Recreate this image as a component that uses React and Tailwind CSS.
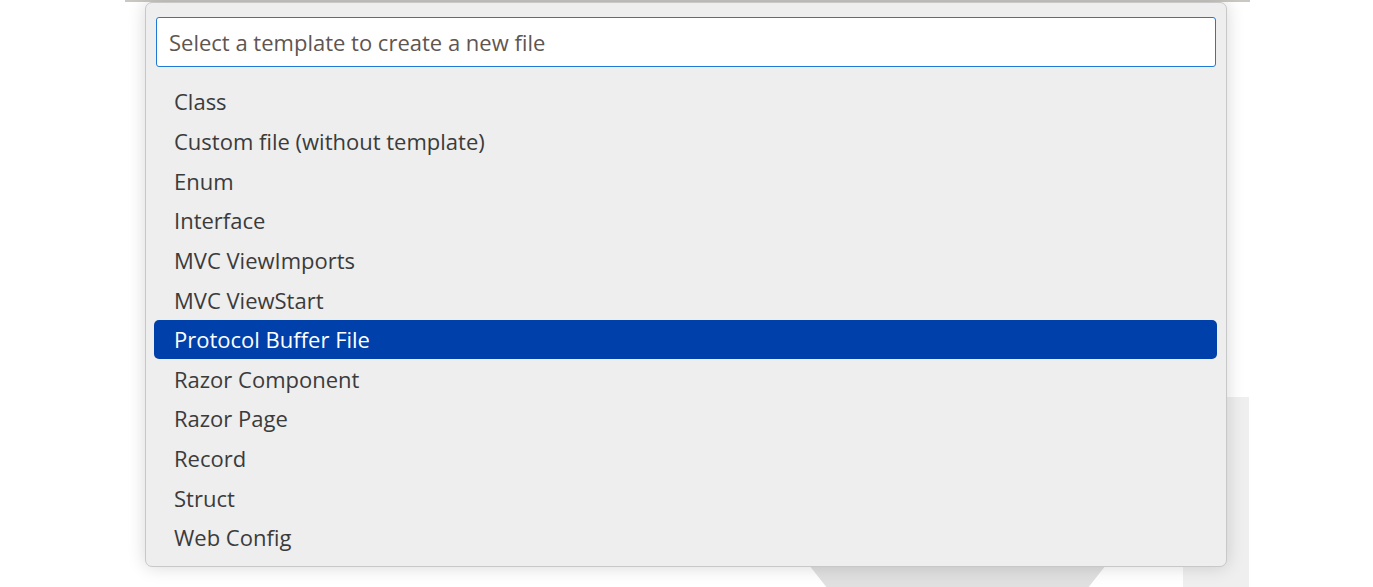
import React from 'react';

const items = [
  'Class',
  'Custom file (without template)',
  'Enum',
  'Interface',
  'MVC ViewImports',
  'MVC ViewStart',
  'Protocol Buffer File',
  'Razor Component',
  'Razor Page',
  'Record',
  'Struct',
  'Web Config',
];

export default function App() {
  const selected = 6;
  return (
    <div className="relative w-[1373px] h-[587px] bg-white overflow-hidden" style={{ fontFamily: '"Open Sans", "Noto Sans", sans-serif' }}>
      {/* editor bits behind the quick pick */}
      <div className="absolute left-[1183px] top-[397px] w-[66px] h-[190px] bg-[#efefef]" />
      <div className="absolute left-[805px] top-[560px] w-[305px] h-[27px] bg-[#e0e0e0] [clip-path:polygon(0_0,100%_0,93%_100%,7%_100%)]" />

      <div className="relative ml-[125px] w-[1125px] h-[2px] bg-[#cbc7c3]" />
      <div className="relative ml-[145px] w-[1082px] h-[565px] bg-[#eeeeee] border border-[#c8c8c8] rounded-[7px] shadow-[0_0_18px_rgba(0,0,0,0.16)] px-[10px] pt-[14px]">
        <div className="h-[50px] bg-white border border-[#1f7ad6] rounded-[3px] flex items-center pl-[12px]">
          <span className="text-[22px] text-[#5f5551]">Select a template to create a new file</span>
        </div>
        <ul className="mt-[15px] -ml-[2px] -mr-[1px]">
          {items.map((name, i) => (
            <li
              key={name}
              className={
                i === selected
                  ? 'h-[39.65px] flex items-center pl-[20px] rounded-[5px] bg-[#0040aa] text-white text-[22px]'
                  : 'h-[39.65px] flex items-center pl-[20px] text-[#3b3b3b] text-[22px]'
              }
            >
              {name}
            </li>
          ))}
        </ul>
      </div>
    </div>
  );
}
